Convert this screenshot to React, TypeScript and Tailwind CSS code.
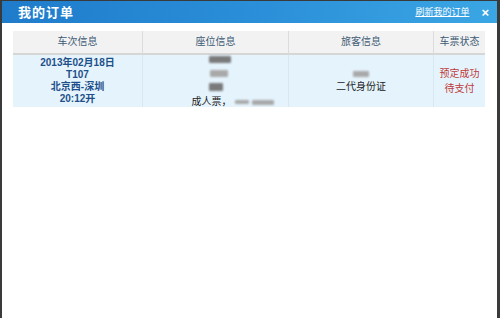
import React from "react"

const cjk = { fontFamily: '"Liberation Sans", "Noto Sans CJK SC", sans-serif' }

function Blur({ w, h = 7, dark = false }: { w: number; h?: number; dark?: boolean }) {
  return (
    <span
      className={`inline-block rounded-[1px] blur-[1px] ${dark ? "bg-[#7a7a7a]" : "bg-[#a9a9a9]"}`}
      style={{ width: w, height: h }}
    />
  )
}

export default function App() {
  return (
    <div className="w-[500px] h-[318px] bg-[#3a3a3a] pl-[2px] pr-[3px] pt-[1px]" style={cjk}>
      <div className="h-full bg-white flex flex-col">
        {/* 标题栏 */}
        <div className="h-[22px] flex items-center justify-between bg-gradient-to-r from-[#1f7ccb] via-[#2a8ed8] to-[#3ba6e4] pl-[16px] pr-[8px]">
          <span className="text-white text-[13px] font-bold tracking-[1px] leading-none">我的订单</span>
          <div className="flex items-center gap-[12px]">
            <span className="text-white text-[9px] underline leading-none">刷新我的订单</span>
            <span className="text-white text-[13px] font-bold leading-none">×</span>
          </div>
        </div>

        {/* 订单表格 */}
        <div className="pl-[11px] pr-[12px] pt-[8px]">
          <div className="grid grid-cols-[130px_146px_145px_1fr] text-[10px] leading-none">
            <div className="h-[24px] bg-[#f2f2f2] border-b-2 border-[#d6d6d6] border-r border-r-[#dcdcdc] flex items-center justify-center text-[#3d5a74]">车次信息</div>
            <div className="h-[24px] bg-[#f2f2f2] border-b-2 border-[#d6d6d6] border-r border-r-[#dcdcdc] flex items-center justify-center text-[#3d5a74]">座位信息</div>
            <div className="h-[24px] bg-[#f2f2f2] border-b-2 border-[#d6d6d6] border-r border-r-[#dcdcdc] flex items-center justify-center text-[#3d5a74]">旅客信息</div>
            <div className="h-[24px] bg-[#f2f2f2] border-b-2 border-[#d6d6d6] flex items-center justify-center text-[#3d5a74]">车票状态</div>

            <div className="h-[52px] bg-[#e5f4fc] border-r border-[#d8e8f2] flex flex-col items-center justify-center text-[#1e4f8a] font-bold text-[10px] leading-[12px]">
              <span>2013年02月18日</span>
              <span>T107</span>
              <span>北京西-深圳</span>
              <span>20:12开</span>
            </div>
            <div className="h-[52px] bg-[#e5f4fc] border-r border-[#d8e8f2] flex flex-col items-center justify-center gap-[4px] text-[#222] text-[10px]">
              <span className="pl-[8px]"><Blur w={22} dark /></span>
              <span className="pl-[6px]"><Blur w={18} /></span>
              <span><Blur w={14} h={8} dark /></span>
              <span className="flex items-center gap-[3px] pl-[34px]">
                成人票，<Blur w={14} h={4} /><Blur w={22} h={5} />
              </span>
            </div>
            <div className="h-[52px] bg-[#e5f4fc] border-r border-[#d8e8f2] flex flex-col items-center justify-center gap-[5px] text-[#222] text-[10px]">
              <Blur w={16} h={6} />
              <span>二代身份证</span>
            </div>
            <div className="h-[52px] bg-[#e5f4fc] flex flex-col items-center justify-center gap-[5px] text-[#c03a3a] text-[10px]">
              <span>预定成功</span>
              <span>待支付</span>
            </div>
          </div>
        </div>
      </div>
    </div>
  )
}
